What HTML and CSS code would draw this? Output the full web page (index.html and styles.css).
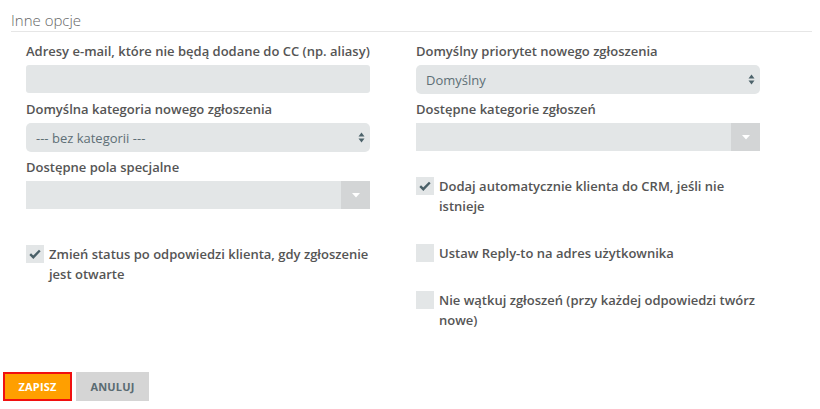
FILE: index.html
```html
<!DOCTYPE html>
<html lang="pl">
    <head>
        <title>Inne opcje</title>
        <meta charset="utf-8">
        <meta name="viewport" content="width=device-width, initial-scale=1.0">
        <link rel="stylesheet" href="styles.css">
    </head>

    <body>
    	<div class="section">
    		<h2 class="section-title">Inne opcje</h2>

    		<div class="columns">
    			<div class="col">
    				<div class="field">
    					<label>Adresy e-mail, które nie będą dodane do CC (np. aliasy)</label>
    					<div class="input"></div>
    				</div>
    				<div class="field">
    					<label>Domyślna kategoria nowego zgłoszenia</label>
    					<div class="select">
    						<span>--- bez kategorii ---</span>
    						<svg class="updown" width="7" height="11" viewBox="0 0 7 11"><path d="M3.5 0.5 L6.5 4.5 L0.5 4.5 Z M3.5 10.5 L6.5 6.5 L0.5 6.5 Z" fill="#4d636b"/></svg>
    					</div>
    				</div>
    				<div class="field">
    					<label>Dostępne pola specjalne</label>
    					<div class="chosen">
    						<div class="chosen-drop"><svg width="8" height="5" viewBox="0 0 8 5"><path d="M0 0 L8 0 L4 4.5 Z" fill="#fff"/></svg></div>
    					</div>
    				</div>
    				<div class="check">
    					<span class="box"><svg width="12" height="10" viewBox="0 0 12 10"><path d="M1.2 5.2 L4.3 8.2 L10.8 1.5" fill="none" stroke="#4a6068" stroke-width="2.4"/></svg></span>
    					<span class="check-text">Zmień status po odpowiedzi klienta, gdy zgłoszenie jest otwarte</span>
    				</div>
    			</div>

    			<div class="col">
    				<div class="field">
    					<label>Domyślny priorytet nowego zgłoszenia</label>
    					<div class="select">
    						<span>Domyślny</span>
    						<svg class="updown" width="7" height="11" viewBox="0 0 7 11"><path d="M3.5 0.5 L6.5 4.5 L0.5 4.5 Z M3.5 10.5 L6.5 6.5 L0.5 6.5 Z" fill="#4d636b"/></svg>
    					</div>
    				</div>
    				<div class="field">
    					<label>Dostępne kategorie zgłoszeń</label>
    					<div class="chosen">
    						<div class="chosen-drop"><svg width="8" height="5" viewBox="0 0 8 5"><path d="M0 0 L8 0 L4 4.5 Z" fill="#fff"/></svg></div>
    					</div>
    				</div>
    				<div class="check check-crm">
    					<span class="box"><svg width="12" height="10" viewBox="0 0 12 10"><path d="M1.2 5.2 L4.3 8.2 L10.8 1.5" fill="none" stroke="#4a6068" stroke-width="2.4"/></svg></span>
    					<span class="check-text">Dodaj automatycznie klienta do CRM, jeśli nie istnieje</span>
    				</div>
    				<div class="check">
    					<span class="box"></span>
    					<span class="check-text">Ustaw Reply-to na adres użytkownika</span>
    				</div>
    				<div class="check">
    					<span class="box"></span>
    					<span class="check-text">Nie wątkuj zgłoszeń (przy każdej odpowiedzi twórz nowe)</span>
    				</div>
    			</div>
    		</div>
    	</div>

    	<div class="actions">
    		<button class="btn btn-save">Zapisz</button>
    		<button class="btn btn-cancel">Anuluj</button>
    	</div>
    </body>
</html>
```

FILE: styles.css
```css
* {
	box-sizing: border-box;
	margin: 0;
	padding: 0;
	font-family: 'Open Sans', sans-serif;
}
body {
	background-color: #fff;
	color: #555;
	width: 820px;
	height: 409px;
	overflow: hidden;
}
.section {
	padding: 9px 8px 0 11px;
}
.section-title {
	font-size: 15px;
	font-weight: 300;
	color: #666;
	line-height: 22px;
	border-bottom: 1px solid #e6e6e6;
}
.columns {
	display: grid;
	grid-template-columns: 344px 344px;
	column-gap: 46px;
	padding: 10px 0 0 15px;
}
.col {
	display: flex;
	flex-direction: column;
}
.field {
	height: 58px;
}
.field label {
	display: block;
	font-size: 13px;
	font-weight: 600;
	line-height: 18px;
	margin-bottom: 5px;
	color: #555;
}
.input {
	height: 28px;
	background-color: #e3e6e7;
	border-radius: 3px;
}
.select {
	height: 29px;
	background-color: #e3e6e7;
	border-radius: 5px;
	display: flex;
	align-items: center;
	justify-content: space-between;
	padding: 0 5px 0 10px;
	font-size: 13px;
	color: #5e6f76;
}
.chosen {
	height: 28px;
	background-color: #e3e6e7;
	display: flex;
	justify-content: flex-end;
}
.chosen-drop {
	width: 29px;
	background-color: #d3d5d6;
	display: flex;
	align-items: center;
	justify-content: center;
}
.check {
	display: flex;
	align-items: flex-start;
	font-size: 13px;
	font-weight: 600;
	line-height: 20px;
	color: #555;
	margin-top: 28px;
}
.check-crm {
	margin-top: 18px;
}
.check + .check {
	margin-top: 27px;
}
.box {
	flex: none;
	width: 18px;
	height: 18px;
	margin-top: 1px;
	margin-right: 5px;
	background-color: #e3e6e7;
	display: flex;
	align-items: center;
	justify-content: center;
}
.actions {
	display: flex;
	gap: 4px;
	padding-left: 3px;
	margin-top: 42px;
}
.btn {
	height: 29px;
	border: 0;
	font-size: 11px;
	font-weight: 700;
	text-transform: uppercase;
	letter-spacing: 0.2px;
}
.btn-save {
	width: 69px;
	background-color: #ff9f00;
	color: #fff;
	border: 2px solid #f01010;
}
.btn-cancel {
	width: 73px;
	background-color: #d5d5d5;
	color: #5a6b72;
}
```
